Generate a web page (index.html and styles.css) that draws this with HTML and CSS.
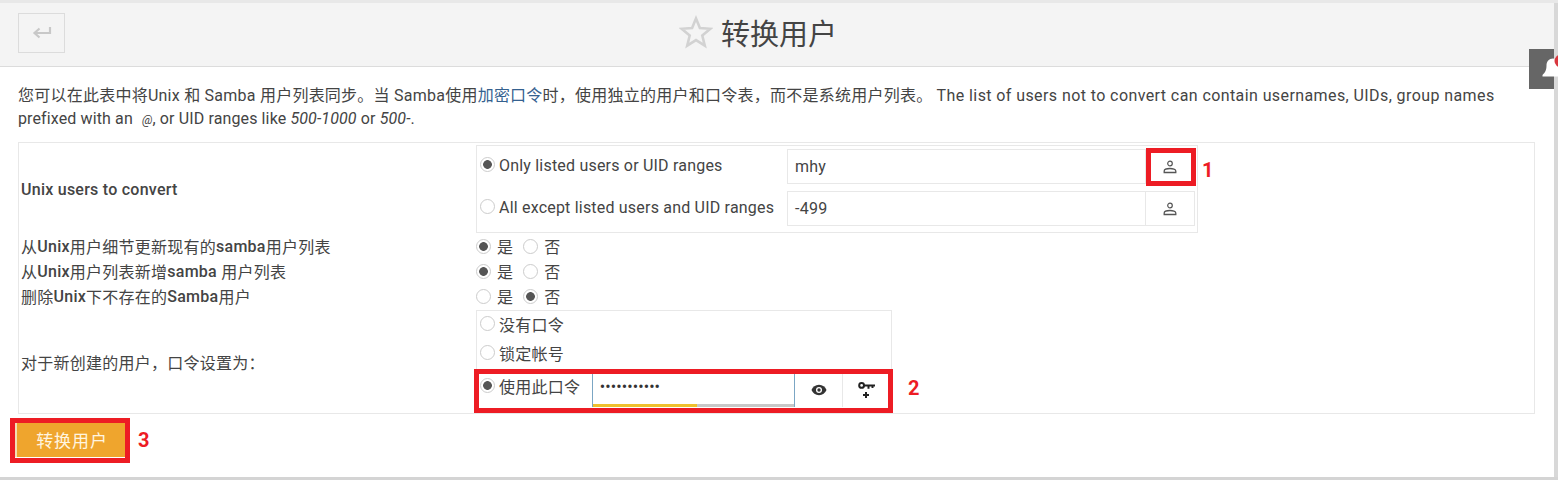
FILE: index.html
```html
<!DOCTYPE html>
<html lang="zh-CN">
<head>
<meta charset="utf-8">
<title>转换用户</title>
<link rel="stylesheet" href="styles.css">
</head>
<body>
<div class="frame">
  <div class="page">
    <header class="head">
      <button class="back" type="button" aria-label="back">
        <svg width="20" height="14" viewBox="0 0 20 14"><path d="M18 1v6H3M7.500 2.500 2.500 7l5 4.500" fill="none" stroke="#c8c8c8" stroke-width="2.200"/></svg>
      </button>
      <h1 class="title">
        <svg class="star" width="34" height="34" viewBox="0 0 34 34"><path d="M17 3.500 20.900 13.100 31.300 13.800 23.300 20.500 25.800 30.600 17 25.100 8.200 30.600 10.700 20.500 2.700 13.800 13.100 13.100Z" fill="none" stroke="#d2d2d2" stroke-width="2.600"/></svg>
        <span>转换用户</span>
      </h1>
    </header>
    <main class="body">
      <p class="intro">您可以在此表中将Unix 和 Samba 用户列表同步。当 Samba使用<a class="link" href="#">加密口令</a>时，使用独立的用户和口令表，而不是系统用户列表。 <span class="intro-en">The list of users not to convert can contain usernames, UIDs, group names</span> <span class="intro-end">prefixed with an <span class="at">@</span>, or UID ranges like <i>500-1000</i> or <i>500-</i>.</span></p>

      <div class="form">
        <div class="label strong">Unix users to convert</div>
        <div class="field">
          <div class="nest-users">
            <label class="opt"><input type="radio" name="mode" checked><span>Only listed users or UID ranges</span></label>
            <div class="group">
              <div class="text">mhy</div>
              <div class="addon addon-user">
                <svg width="14" height="14" viewBox="0 0 14 14"><circle cx="7" cy="3.500" r="2.300" fill="none" stroke="#555" stroke-width="1.200"/><path d="M1.200 12.500v-1.500c0-1.500 3-2.500 5.800-2.500s5.800 1 5.800 2.500v1.500Z" fill="none" stroke="#555" stroke-width="1.300"/></svg>
              </div>
            </div>
            <label class="opt"><input type="radio" name="mode"><span>All except listed users and UID ranges</span></label>
            <div class="group">
              <div class="text">-499</div>
              <div class="addon addon-user">
                <svg width="14" height="14" viewBox="0 0 14 14"><circle cx="7" cy="3.500" r="2.300" fill="none" stroke="#555" stroke-width="1.200"/><path d="M1.200 12.500v-1.500c0-1.500 3-2.500 5.800-2.500s5.800 1 5.800 2.500v1.500Z" fill="none" stroke="#555" stroke-width="1.300"/></svg>
              </div>
            </div>
          </div>
        </div>

        <div class="label line">从<b>Unix</b>用户细节更新现有的<b>samba</b>用户列表</div>
        <div class="yesno">
          <label class="yn"><input type="radio" name="r1" checked><span>是</span></label>
          <label class="yn"><input type="radio" name="r1"><span>否</span></label>
        </div>
        <div class="label line">从<b>Unix</b>用户列表新增<b>samba</b> 用户列表</div>
        <div class="yesno">
          <label class="yn"><input type="radio" name="r2" checked><span>是</span></label>
          <label class="yn"><input type="radio" name="r2"><span>否</span></label>
        </div>
        <div class="label line">删除<b>Unix</b>下不存在的<b>Samba</b>用户</div>
        <div class="yesno">
          <label class="yn"><input type="radio" name="r3"><span>是</span></label>
          <label class="yn"><input type="radio" name="r3" checked><span>否</span></label>
        </div>

        <div class="label">对于新创建的用户，口令设置为：</div>
        <div class="field">
          <div class="nest-pass">
            <label class="popt"><input type="radio" name="pw"><span>没有口令</span></label>
            <label class="popt"><input type="radio" name="pw"><span>锁定帐号</span></label>
            <div class="pw-row">
              <label class="popt popt-last"><input type="radio" name="pw" checked><span>使用此口令</span></label>
              <div class="pw-input">
                <div class="pw-dots">•••••••••••</div>
                <div class="meter"><div class="meter-fill"></div></div>
              </div>
              <div class="addon addon-pw">
                <svg width="16" height="12" viewBox="0 0 16 12"><path d="M8 .8C4.500.8 1.700 3 .5 6c1.200 3 4 5.200 7.500 5.200s6.300-2.200 7.500-5.200C14.300 3 11.500.8 8 .8Z" fill="#333"/><circle cx="8" cy="6" r="3" fill="#fff"/><circle cx="8" cy="6" r="1.700" fill="#333"/></svg>
              </div>
              <div class="addon addon-pw">
                <svg width="17" height="17" viewBox="0 0 17 17"><circle cx="3.600" cy="3.400" r="2.400" fill="none" stroke="#222" stroke-width="2"/><path d="M6 3.400h11M10.500 3.400v3.400M14.500 3.400v2.600M8 10v6M5 13h6" fill="none" stroke="#222" stroke-width="2"/></svg>
              </div>
            </div>
          </div>
        </div>
      </div>

      <div class="actions"><button class="submit" type="button">转换用户</button></div>
    </main>
  </div>
  <div class="scrollbar"></div>

  <div class="notify">
    <svg width="24" height="24" viewBox="0 0 24 24"><path d="M12 1.500c-4 0-6.500 3-6.500 7 0 5-1.500 7-4 9.500v1.500h21V18c-2.500-2.500-4-4.500-4-9.500 0-4-2.500-7-6.500-7Z" fill="#fff"/><circle cx="20" cy="4" r="6.500" fill="#d9373e"/></svg>
  </div>

  <div class="mark mark-1"><span class="num">1</span></div>
  <div class="mark mark-2"><span class="num">2</span></div>
  <div class="mark mark-3"><span class="num">3</span></div>
</div>
</body>
</html>
```

FILE: styles.css
```css
* { box-sizing: border-box; }
html, body { margin: 0; height: 100%; overflow: hidden; background: #fff; }
body {
  font-family: Roboto, "Noto Sans CJK SC", sans-serif;
  font-size: 16px;
  letter-spacing: .25px;
  color: #444;
}
.frame { position: relative; display: flex; width: 1558px; height: 480px; overflow: hidden; border-bottom: 3px solid #d4d4d4; border-top: 3px solid #e8e8e8; }
.page { flex: 1; min-width: 0; }
.scrollbar { width: 4px; background: #d8d8d8; }

.head {
  position: relative;
  display: flex;
  align-items: center;
  justify-content: center;
  height: 64px;
  background: #f4f4f4;
  border-bottom: 1px solid #dcdcdc;
}
.back {
  position: absolute;
  left: 18px;
  top: 10px;
  display: flex;
  align-items: center;
  justify-content: center;
  width: 47px;
  height: 40px;
  padding: 0;
  background: #f4f4f4;
  border: 1px solid #dcdcdc;
}
.title {
  display: flex;
  align-items: center;
  gap: 8px;
  margin: 0 38px 0 0;
  font-size: 29px;
  font-weight: 400;
  letter-spacing: 0;
  color: #444;
  line-height: 40px;
}
.star { flex: none; margin-bottom: 5px; }

.body { padding: 0 18px; }
.intro { margin: 0; padding-top: 17px; line-height: 23px; height: 75px; letter-spacing: .24px; }
.intro-en { letter-spacing: .41px; }
.intro-end { letter-spacing: .12px; }
.link { color: #35618f; text-decoration: none; }
.at { font-size: 12px; font-style: italic; margin: 0 0 0 5px; }

.form {
  display: grid;
  grid-template-columns: 457px 1fr;
  width: 1517px;
  border: 1px solid #e8e8e8;
  grid-template-rows: 92px 25px 25px 25px 103px;
}
.label { display: flex; align-items: center; padding-left: 2px; white-space: pre; }
.strong { font-weight: 500; }
.line { padding-bottom: 3px; }
.line b { font-weight: 500; }
.field { min-width: 0; }

.nest-users {
  display: grid;
  grid-template-columns: 310px 408px;
  grid-template-rows: 42px 42px;
  width: 722px;
  height: 88px;
  margin: 2px 0 0 0;
  padding-top: 3px;
  border: 1px solid #e8e8e8;
}
input[type="radio"] {
  flex: none;
  appearance: none;
  width: 15px;
  height: 15px;
  margin: 0;
  border: 1px solid #ccc;
  border-radius: 50%;
  background: #fff;
  display: inline-block;
}
input[type="radio"]:checked { background: radial-gradient(circle, #555 0 4px, #fff 4.700px); }

.opt { display: flex; align-items: flex-start; gap: 4px; padding: 7px 0 0 3px; white-space: nowrap; letter-spacing: .2px; }
.opt input { margin-top: 1px; }
.group { display: flex; height: 35px; border: 1px solid #e8e8e8; width: 408px; }
.text { flex: 1; padding: 6px 7px; line-height: 22px; }
.addon { display: flex; align-items: center; justify-content: center; flex: none; }
.addon-user { width: 49px; border-left: 1px solid #e8e8e8; }

.yesno { display: flex; align-items: center; gap: 10px; padding-bottom: 3px; }
.yn { display: flex; align-items: center; gap: 6px; white-space: nowrap; }

.nest-pass { width: 416px; height: 102px; border: 1px solid #e8e8e8; border-bottom: 0; }
.popt { display: flex; align-items: center; gap: 4px; height: 29px; padding: 0 0 4px 3px; white-space: nowrap; }
.pw-row { display: flex; align-items: stretch; height: 34px; margin-top: 4px; }
.popt-last { width: 115px; height: 29px; }
.pw-input { position: relative; width: 204px; border: 1px solid #7ba6c4; border-width: 0 1px; }
.pw-dots { padding: 3px 7px; line-height: 22px; font-size: 16px; letter-spacing: .1px; color: #333; }
.meter { position: absolute; left: 0; right: 0; bottom: 0; height: 3px; background: #c8c8c8; }
.meter-fill { width: 52%; height: 100%; background: #efc02e; }
.addon-pw { width: 48px; border-right: 1px solid #e8e8e8; }

.actions { padding-top: 8px; }
.submit {
  width: 110px;
  height: 35px;
  margin-left: -3px;
  padding: 0 0 0 2px;
  border: 0;
  border-left: 2px solid #f3dfb4;
  background: #efa52d;
  color: #fff5e0;
  font-family: inherit;
  font-size: 17px;
  letter-spacing: .9px;
}

.notify {
  position: absolute;
  left: 1529px;
  top: 46px;
  width: 25px;
  height: 40px;
  padding: 8px 0 0 12px;
  background: #666;
}
.notify svg { display: block; overflow: visible; }
.mark { position: absolute; border: 5px solid #ed1c24; }
.mark-1 { left: 1146px; top: 145px; width: 50px; height: 38px; }
.mark-2 { left: 474px; top: 366px; width: 419px; height: 44px; }
.mark-3 { left: 10px; top: 415px; width: 120px; height: 45px; }
.num { position: absolute; top: 50%; left: 100%; margin-top: -9px; line-height: 24px; font-size: 20px; font-weight: 700; color: #ed1c24; }
.mark-1 .num { padding-left: 11px; }
.mark-2 .num { padding-left: 20px; margin-top: -15px; }
.mark-3 .num { padding-left: 13px; margin-top: -13px; }
```
